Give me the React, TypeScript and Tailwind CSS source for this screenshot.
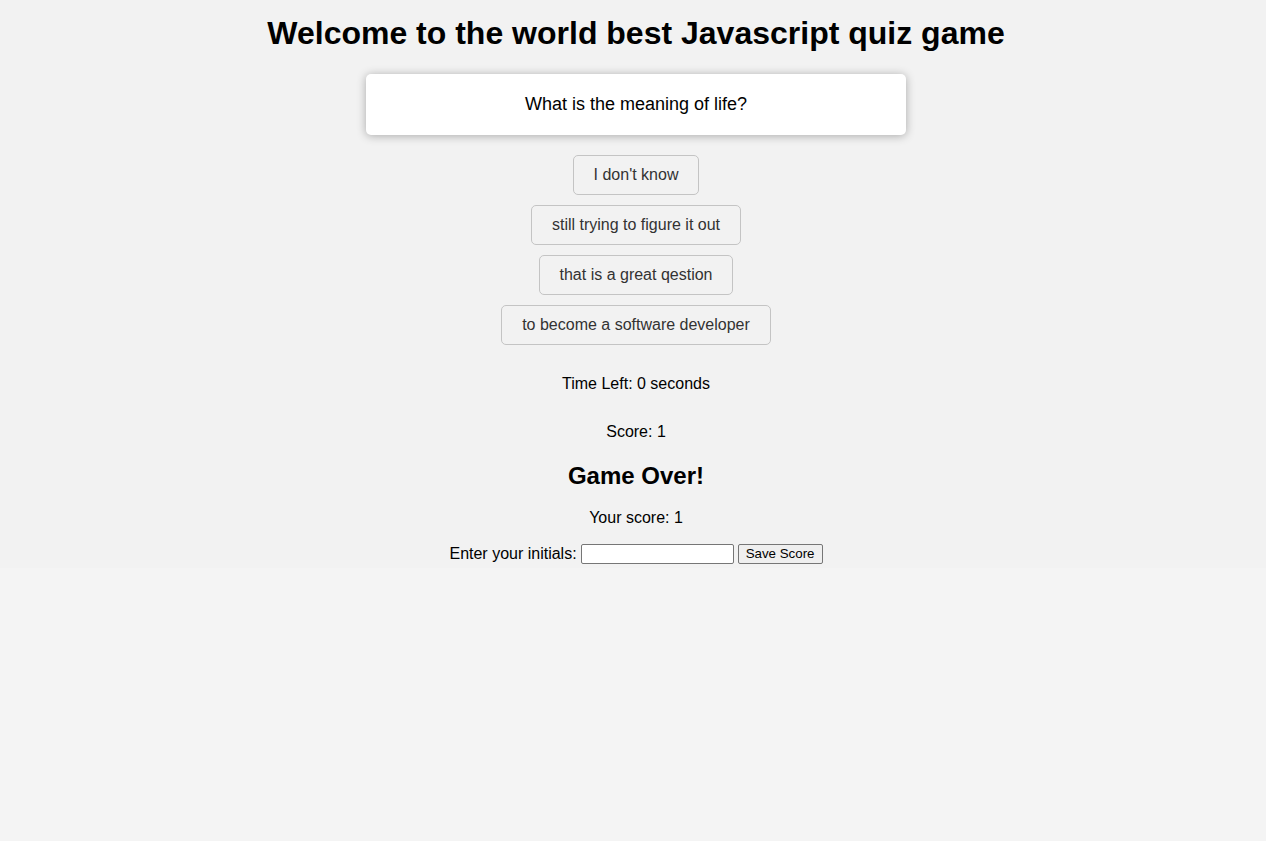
const answers = [
  "I don't know",
  "still trying to figure it out",
  "that is a great qestion",
  "to become a software developer",
];

const App = () => {
  return (
    <div className="min-h-screen bg-[#f4f4f4] text-black font-['Liberation_Sans',Arial,sans-serif]">
      <div className="bg-[#f2f2f2] flex flex-col items-center text-center pt-[15px] pb-[4px] pl-[6px]">
        <h1 className="text-[32px] font-bold leading-[37px]">Welcome to the world best Javascript quiz game</h1>

        <div className="mt-[22px] w-[540px] bg-white rounded-[5px] shadow-[0_1px_10px_rgba(0,0,0,0.3)] p-[20px] text-[18px] leading-[21px]">
          What is the meaning of life?
        </div>

        <div className="mt-[20px] flex flex-col items-center gap-[10px]">
          {answers.map((a) => (
            <button
              key={a}
              className="px-[20px] py-[10px] text-[16px] leading-[18px] text-[#333] border border-[#c4c4c4] rounded-[5px] bg-[#f2f2f2]"
            >
              {a}
            </button>
          ))}
        </div>

        <p className="mt-[30px] text-[16px] leading-[18px]">Time Left: 0 seconds</p>
        <p className="mt-[30px] text-[16px] leading-[18px]">Score: 1</p>

        <h2 className="mt-[21px] text-[24px] font-bold leading-[28px]">Game Over!</h2>
        <p className="mt-[19px] text-[16px] leading-[18px]">Your score: 1</p>
        <div className="mt-[17px] flex items-center text-[16px] leading-[18px]">
          <span>Enter your initials:</span>
          <input
            type="text"
            className="ml-[4px] w-[153px] h-[20px] bg-white border border-[#767676] rounded-[2px]"
          />
          <button className="ml-[4px] h-[20px] px-[7px] text-[13.33px] leading-[16px] bg-[#efefef] border border-[#767676] rounded-[2px]">
            Save Score
          </button>
        </div>
      </div>
    </div>
  );
};

export default App;
